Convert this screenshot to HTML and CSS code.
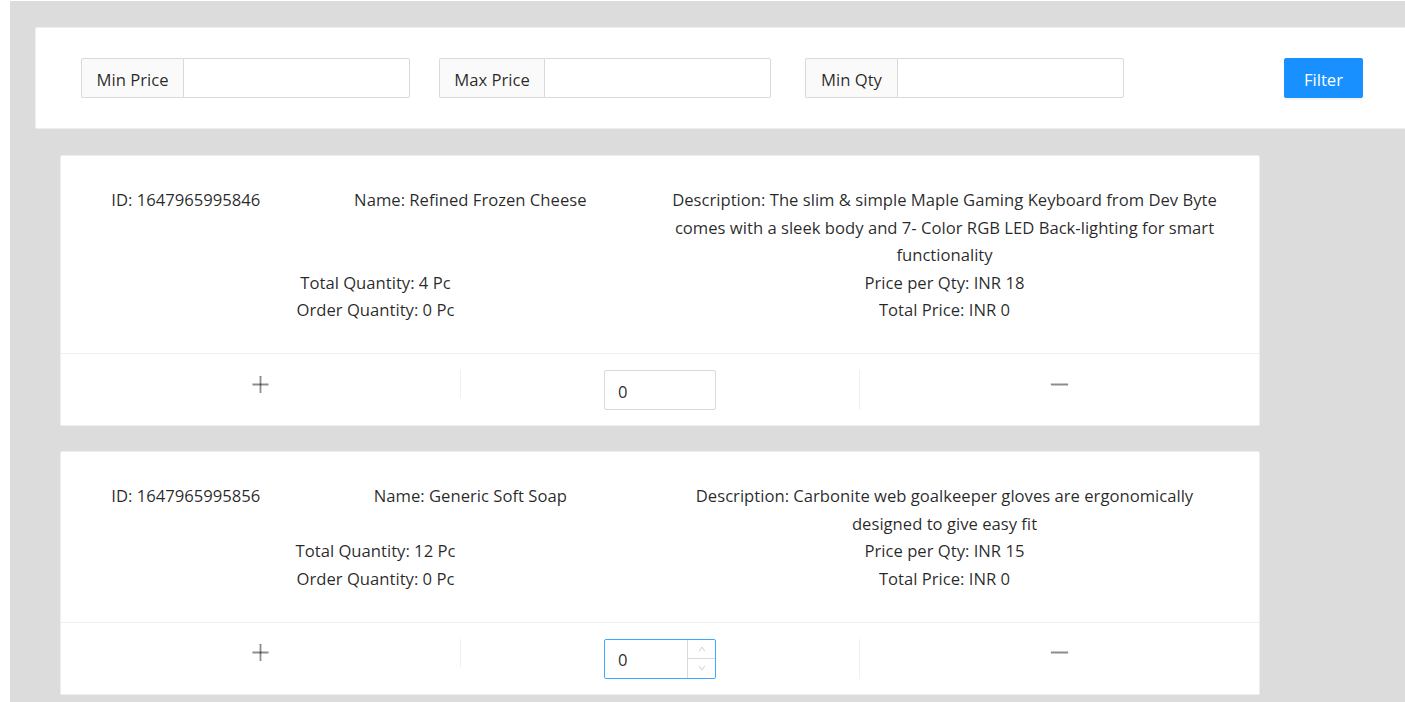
FILE: index.html
```html
<!DOCTYPE html>
<html lang="en">
<head>
<meta charset="utf-8">
<title>Products</title>
<link rel="stylesheet" href="styles.css">
</head>
<body>
<div class="page">
  <main class="main">
    <section class="filter-card">
      <div class="filter-row">
        <div class="group g-min-price">
          <span class="addon a-min-price">Min Price</span>
          <input class="field" type="text">
        </div>
        <div class="group g-max-price">
          <span class="addon a-max-price">Max Price</span>
          <input class="field" type="text">
        </div>
        <div class="group g-min-qty">
          <span class="addon a-min-qty">Min Qty</span>
          <input class="field" type="text">
        </div>
        <button class="btn-primary" type="button">Filter</button>
      </div>
    </section>

    <div class="list">
      <article class="card">
        <div class="card-body">
          <div class="row">
            <div class="col span4">ID: 1647965995846</div>
            <div class="col span8">Name: Refined Frozen Cheese</div>
            <div class="col span12">Description: The slim &amp; simple Maple Gaming Keyboard from Dev Byte comes with a sleek body and 7- Color RGB LED Back-lighting for smart functionality</div>
            <div class="col span12">Total Quantity: 4 Pc<br>Order Quantity: 0 Pc</div>
            <div class="col span12">Price per Qty: INR 18<br>Total Price: INR 0</div>
          </div>
        </div>
        <ul class="actions">
          <li class="act act-icon">
            <svg class="icon" viewBox="64 64 896 896" aria-hidden="true"><path d="M482 152h60q8 0 8 8v704q0 8-8 8h-60q-8 0-8-8V160q0-8 8-8z"/><path d="M176 474h672q8 0 8 8v60q0 8-8 8H176q-8 0-8-8v-60q0-8 8-8z"/></svg>
          </li>
          <li class="act act-num">
            <div class="num">
              <input class="num-input" type="text" value="0">
            </div>
          </li>
          <li class="act act-icon act-last">
            <svg class="icon" viewBox="64 64 896 896" aria-hidden="true"><path d="M872 474H152c-4.4 0-8 3.6-8 8v60c0 4.4 3.6 8 8 8h720c4.4 0 8-3.6 8-8v-60c0-4.4-3.6-8-8-8z"/></svg>
          </li>
        </ul>
      </article>

      <article class="card">
        <div class="card-body">
          <div class="row">
            <div class="col span4">ID: 1647965995856</div>
            <div class="col span8">Name: Generic Soft Soap</div>
            <div class="col span12">Description: Carbonite web goalkeeper gloves are ergonomically designed to give easy fit</div>
            <div class="col span12">Total Quantity: 12 Pc<br>Order Quantity: 0 Pc</div>
            <div class="col span12">Price per Qty: INR 15<br>Total Price: INR 0</div>
          </div>
        </div>
        <ul class="actions">
          <li class="act act-icon">
            <svg class="icon" viewBox="64 64 896 896" aria-hidden="true"><path d="M482 152h60q8 0 8 8v704q0 8-8 8h-60q-8 0-8-8V160q0-8 8-8z"/><path d="M176 474h672q8 0 8 8v60q0 8-8 8H176q-8 0-8-8v-60q0-8 8-8z"/></svg>
          </li>
          <li class="act act-num">
            <div class="num num-focused">
              <input class="num-input" type="text" value="0">
              <div class="handlers">
                <span class="handler handler-up"><svg viewBox="64 64 896 896" aria-hidden="true"><path d="M890.5 755.3L537.9 269.2c-12.8-17.6-39-17.6-51.7 0L133.5 755.3A8 8 0 00140 768h75c5.1 0 9.9-2.5 12.9-6.6L512 369.8l284.1 391.6c3 4.1 7.8 6.6 12.9 6.6h75c6.5 0 10.3-7.4 6.5-12.7z"/></svg></span>
                <span class="handler handler-down"><svg viewBox="64 64 896 896" aria-hidden="true"><path d="M884 256h-75c-5.1 0-9.9 2.5-12.9 6.6L512 654.2 227.9 262.6c-3-4.1-7.8-6.6-12.9-6.6h-75c-6.5 0-10.3 7.4-6.5 12.7l352.6 486.1c12.8 17.6 39 17.6 51.7 0l352.6-486.1c3.9-5.3.1-12.7-6.4-12.7z"/></svg></span>
              </div>
            </div>
          </li>
          <li class="act act-icon act-last">
            <svg class="icon" viewBox="64 64 896 896" aria-hidden="true"><path d="M872 474H152c-4.4 0-8 3.6-8 8v60c0 4.4 3.6 8 8 8h720c4.4 0 8-3.6 8-8v-60c0-4.4-3.6-8-8-8z"/></svg>
          </li>
        </ul>
      </article>
    </div>
  </main>
</div>
</body>
</html>
```

FILE: styles.css
```css
html, body {
  margin: 0;
  padding: 0;
  overflow: hidden;
  background: #ffffff;
}

body {
  font-family: "Open Sans", "Noto Sans", "Liberation Sans", sans-serif;
  color: rgba(0, 0, 0, 0.85);
  font-size: 16.65px;
}

.page {
  padding: 1px 0 0 10px;
  height: 701px;
}

.main {
  background: #dcdcdc;
  height: 100%;
  padding: 26px 0 0 25px;
  box-sizing: border-box;
}

/* Filter card */
.filter-card {
  background: #ffffff;
  border: 1px solid #eeeeee;
  border-right: none;
  border-radius: 2px 0 0 2px;
  padding: 30px 0 30px 45px;
  height: 102px;
  box-sizing: border-box;
}

.filter-row {
  display: flex;
  align-items: center;
}

.group {
  display: flex;
  height: 40px;
  box-sizing: border-box;
}

.g-min-price { width: 329px; }
.g-max-price { width: 332px; margin-left: 29px; }
.g-min-qty { width: 319px; margin-left: 34px; }

.addon {
  display: flex;
  align-items: center;
  justify-content: center;
  padding-top: 3px;
  background: #fafafa;
  border: 1px solid #d9d9d9;
  border-right: none;
  border-radius: 2px 0 0 2px;
  box-sizing: border-box;
  font-size: 16.65px;
  color: rgba(0, 0, 0, 0.85);
  white-space: nowrap;
}

.a-min-price { width: 102px; }
.a-max-price { width: 105px; }
.a-min-qty { width: 92px; }

.field {
  flex: 1;
  min-width: 0;
  height: 40px;
  box-sizing: border-box;
  border: 1px solid #d9d9d9;
  border-radius: 0 2px 2px 0;
  padding: 6px 11px;
  font: inherit;
  outline: none;
  background: #ffffff;
}

.btn-primary {
  margin-left: 160px;
  width: 79px;
  height: 40px;
  border: 1px solid #1890ff;
  background: #1890ff;
  color: #ffffff;
  border-radius: 2px;
  font-family: inherit;
  font-size: 16.65px;
  padding: 3px 0 0;
  box-shadow: 0 2px 0 rgba(0, 0, 0, 0.045);
  cursor: pointer;
}

/* Product list */
.list {
  display: flex;
  flex-direction: column;
  gap: 25px;
  padding: 26px 0 0 25px;
}

.card {
  width: 1200px;
  background: #ffffff;
  border: 1px solid #eeeeee;
  border-radius: 2px;
  box-sizing: border-box;
}

.card-body {
  padding: 30px 30px 29.5px 30px;
}

.row {
  display: grid;
  grid-template-columns: repeat(24, 1fr);
  text-align: center;
  font-size: 16.65px;
  line-height: 27.5px;
}

.col {
  padding: 0 8px;
}

.span4 { grid-column: span 4; }
.span8 { grid-column: span 8; }
.span12 { grid-column: span 12; }

/* Actions */
.actions {
  list-style: none;
  margin: 0;
  padding: 0;
  display: flex;
  align-items: flex-start;
  border-top: 1px solid #f0f0f0;
  background: #ffffff;
}

.act {
  flex: 1;
  margin: 16px 0 15px;
  display: flex;
  justify-content: center;
  align-items: center;
  border-right: 1px solid #f0f0f0;
}

.act-icon {
  height: 28px;
}

.act-last {
  border-right: none;
}

.icon {
  width: 21px;
  height: 21px;
  fill: rgba(0, 0, 0, 0.45);
}

.num {
  position: relative;
  width: 112px;
  height: 40px;
  box-sizing: border-box;
  border: 1px solid #d9d9d9;
  border-radius: 2px;
  background: #ffffff;
}

.num-focused {
  border-color: #40a9ff;
}

.num-input {
  width: 100%;
  height: 38px;
  box-sizing: border-box;
  border: none;
  outline: none;
  padding: 2px 11px 0 13px;
  font: inherit;
  font-size: 16.65px;
  color: rgba(0, 0, 0, 0.85);
  background: transparent;
}

.handlers {
  position: absolute;
  top: 0;
  right: 0;
  width: 27px;
  height: 38px;
  border-left: 1px solid #d9d9d9;
  display: flex;
  flex-direction: column;
}

.handler {
  flex: 1;
  display: flex;
  align-items: center;
  justify-content: center;
}

.handler-down {
  border-top: 1px solid #d9d9d9;
}

.handler svg {
  width: 8px;
  height: 8px;
  fill: #c8c8c8;
}
```
